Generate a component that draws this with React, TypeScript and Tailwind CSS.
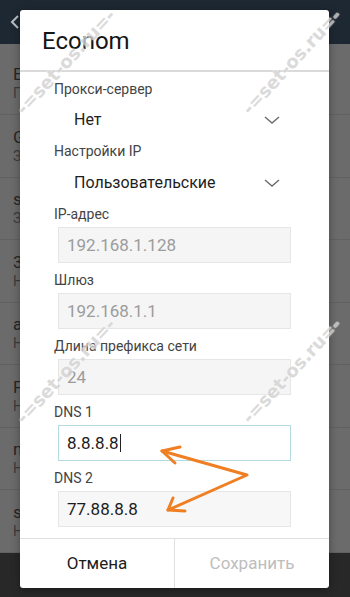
import React from "react";

const FONT = { fontFamily: "Roboto, 'Noto Sans', sans-serif" };

const networks = [
  { name: "Econom", sub: "Подключено" },
  { name: "Guest_WiFi", sub: "Защищено" },
  { name: "smart_home", sub: "Защищено" },
  { name: "3G_router", sub: "Не в зоне действия" },
  { name: "alex_net", sub: "Не в зоне действия" },
  { name: "FreeWifi", sub: "Не в зоне действия" },
  { name: "netgear", sub: "Не в зоне действия" },
  { name: "sveta", sub: "Не в зоне действия" },
];

function Chevron() {
  return (
    <svg width="16" height="8" viewBox="0 0 16 8" fill="none">
      <polyline points="1,1 8,7 15,1" stroke="#6e6e6e" strokeWidth="1.5" />
    </svg>
  );
}

function Label({ children }: { children: React.ReactNode }) {
  return <div className="flex h-5 items-center text-[14px] leading-none text-[#444]">{children}</div>;
}

function Spinner({ value, h }: { value: string; h: string }) {
  return (
    <div className={`flex ${h} w-[237px] items-center justify-between pl-5 pr-[11px]`}>
      <span className="text-[16px] leading-none text-[#1e1e1e]">{value}</span>
      <Chevron />
    </div>
  );
}

function Field({ label, value, variant }: { label: string; value: string; variant: "off" | "focus" | "on" }) {
  const box =
    variant === "focus"
      ? "border-[#b4dbe2] bg-white text-[#1c1c1c]"
      : variant === "on"
        ? "border-[#e6e6e6] bg-[#f7f7f7] text-[#1c1c1c]"
        : "border-[#e6e6e6] bg-[#f5f5f5] text-[#9c9c9c]";
  return (
    <div className="flex flex-col">
      <Label>{label}</Label>
      <div className={`mt-[3px] ml-1 flex h-9 w-[233px] items-center border pl-[8px] text-[17px] leading-none ${box}`}>
        <span>{value}</span>
        {variant === "focus" && <span className="ml-[1px] inline-block h-[18px] w-[1.5px] bg-[#222]" />}
      </div>
    </div>
  );
}

function Watermark({ x, y }: { x: number; y: number }) {
  return (
    <div
      className="pointer-events-none absolute whitespace-nowrap text-[18px] font-bold leading-none text-[#d2d2d2]"
      style={{
        left: x,
        top: y,
        transform: "translate(-50%, -50%) rotate(-47deg)",
        textShadow: "0 0 2px #fff, 0 0 1px #fff",
        opacity: 0.8,
        fontFamily: "'DejaVu Sans', sans-serif",
      }}
    >
      -=set-os.ru=-
    </div>
  );
}

export default function App() {
  return (
    <div className="relative h-[597px] w-[350px] overflow-hidden" style={FONT}>
      {/* Background screen */}
      <div className="flex h-full flex-col">
        <div className="flex h-[45px] items-center bg-[#1e2832] pl-[9px]">
          <svg width="12" height="16" viewBox="0 0 12 16" fill="none">
            <polyline points="9,2 3,8 9,14" stroke="#b9c0c6" strokeWidth="2" />
          </svg>
        </div>
        <div className="flex flex-1 flex-col bg-[#6b6b6b] pt-[9px]">
          {networks.map((n) => (
            <div key={n.name + n.sub} className="flex h-[62.5px] flex-col justify-center border-b border-[#616161] pl-[13px]">
              <div className="text-[17px] leading-[20px] text-[#262626]">{n.name}</div>
              <div className="text-[14px] leading-[18px] text-[#3c3c3c]">{n.sub}</div>
            </div>
          ))}
        </div>
        <div className="h-[46px] bg-[#282828]" />
      </div>

      {/* Dialog */}
      <div className="absolute left-[20px] top-[10px] flex h-[578px] w-[309px] flex-col rounded-[3px] bg-white shadow-[0_2px_8px_rgba(0,0,0,0.35)]">
        <div className="flex h-[60px] items-center pl-[22px] pt-[2px] text-[24px] leading-none text-[#151515]">Econom</div>
        <div className="h-[2px] bg-[#dadada]" />
        <div className="flex flex-col pl-[34px] pt-[7px]">
          <Label>Прокси-сервер</Label>
          <Spinner value="Нет" h="h-[42px]" />
          <Label>Настройки IP</Label>
          <Spinner value="Пользовательские" h="h-[43px]" />
          <div className="flex flex-col gap-[7px]">
            <Field label="IP-адрес" value="192.168.1.128" variant="off" />
            <Field label="Шлюз" value="192.168.1.1" variant="off" />
            <Field label="Длина префикса сети" value="24" variant="off" />
            <Field label="DNS 1" value="8.8.8.8" variant="focus" />
            <Field label="DNS 2" value="77.88.8.8" variant="on" />
          </div>
        </div>
        <div className="mt-auto flex h-[50px] border-t border-[#e0e0e0]">
          <div className="flex flex-1 items-center justify-center text-[17px] text-[#1c1c1c]">Отмена</div>
          <div className="w-px bg-[#e0e0e0]" />
          <div className="flex flex-1 items-center justify-center text-[17px] text-[#bdbdbd]">Сохранить</div>
        </div>
      </div>

      {/* Annotation arrows */}
      <svg className="pointer-events-none absolute left-0 top-0" width="350" height="597" viewBox="0 0 350 597" fill="none">
        <g stroke="#ef7f22" strokeWidth="3" strokeLinecap="round" strokeLinejoin="round">
          <polyline points="162,451 247,475 168,510" />
          <polyline points="180,447 162,451 175,463" />
          <polyline points="173,498 168,510 185,511" />
        </g>
      </svg>

      <Watermark x={66} y={62} />
      <Watermark x={292} y={62} />
      <Watermark x={66} y={371} />
      <Watermark x={292} y={371} />
    </div>
  );
}
